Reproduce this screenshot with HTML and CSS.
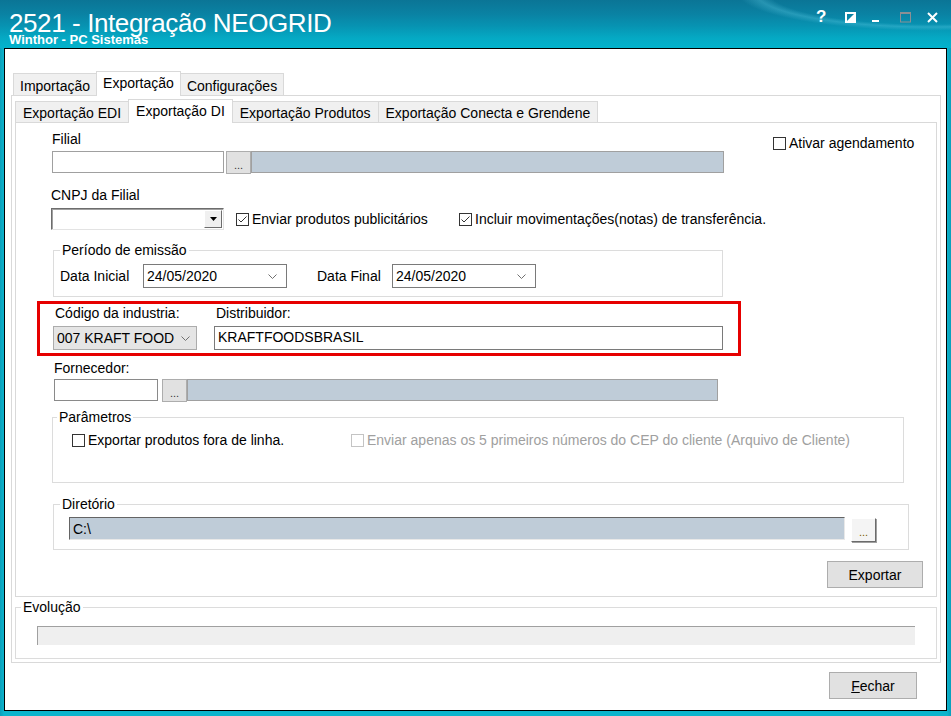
FILE: index.html
```html
<!DOCTYPE html>
<html lang="pt-BR">
<head>
    <meta charset="UTF-8">
    <meta name="viewport" content="width=device-width, initial-scale=1.0">
    <title>2521 - Integração NEOGRID</title>
    <link rel="stylesheet" href="styles.css">
</head>
<body>
<div class="window">
    <header class="titlebar">
        <div class="title">
            <div class="title-main">2521 - Integração NEOGRID</div>
            <div class="title-sub">Winthor - PC Sistemas</div>
        </div>
        <div class="caption-buttons">
            <span class="cap-help">?</span>
            <svg class="cap-icon cap-theme" width="11" height="11" viewBox="0 0 11 11">
                <rect x="1" y="1" width="9" height="9" fill="none" stroke="#fff" stroke-width="2"/>
                <polygon points="10,1 10,10 1,10" fill="#fff"/>
            </svg>
            <svg class="cap-icon cap-min" width="7" height="11" viewBox="0 0 7 11">
                <rect x="0" y="8" width="7" height="2" fill="#fff"/>
            </svg>
            <svg class="cap-icon cap-max" width="11" height="11" viewBox="0 0 11 11">
                <rect x="0.5" y="0.5" width="10" height="9.5" fill="none" stroke="#8a8f94"/>
                <rect x="0" y="0" width="11" height="2" fill="#8a8f94"/>
            </svg>
            <svg class="cap-icon cap-close" width="11" height="11" viewBox="0 0 11 11">
                <path d="M1 1 L10 10 M10 1 L1 10" stroke="#fff" stroke-width="2"/>
            </svg>
        </div>
    </header>

    <main class="client">
        <div class="tabs outer-tabs">
            <span class="tab">Importação</span>
            <span class="tab active">Exportação</span>
            <span class="tab">Configurações</span>
        </div>

        <section class="outer-panel">
            <div class="tabs inner-tabs">
                <span class="tab">Exportação EDI</span>
                <span class="tab active">Exportação DI</span>
                <span class="tab">Exportação Produtos</span>
                <span class="tab">Exportação Conecta e Grendene</span>
            </div>

            <div class="inner-panel">
                <div class="row-top">
                    <div class="filial">
                        <div class="label">Filial</div>
                        <div class="lookup">
                            <span class="field filial-code"></span>
                            <span class="btn-dots">...</span>
                            <span class="field readonly filial-name"></span>
                        </div>
                    </div>
                    <label class="check ativar"><span class="chk"></span>Ativar agendamento</label>
                </div>

                <div class="label cnpj-label">CNPJ da Filial</div>
                <div class="row-cnpj">
                    <span class="combo-classic">
                        <span class="drop">
                            <svg width="7" height="4" viewBox="0 0 7 4"><polygon points="0,0 7,0 3.5,4" fill="#000"/></svg>
                        </span>
                    </span>
                    <label class="check enviar">
                        <span class="chk"><svg width="11" height="11" viewBox="0 0 11 11"><path d="M1.5 5.5 L4 8 L9.5 2.5" fill="none" stroke="#333" stroke-width="1"/></svg></span>Enviar produtos publicitários
                    </label>
                    <label class="check">
                        <span class="chk"><svg width="11" height="11" viewBox="0 0 11 11"><path d="M1.5 5.5 L4 8 L9.5 2.5" fill="none" stroke="#333" stroke-width="1"/></svg></span>Incluir movimentações(notas) de transferência.
                    </label>
                </div>

                <fieldset class="group periodo">
                    <legend>Período de emissão</legend>
                    <div class="row-datas">
                        <span class="data-label">Data Inicial</span>
                        <span class="date">24/05/2020
                            <svg width="9" height="5" viewBox="0 0 9 5"><polyline points="0.5,0.5 4.5,4.5 8.5,0.5" fill="none" stroke="#707070"/></svg>
                        </span>
                        <span class="data-label final">Data Final</span>
                        <span class="date">24/05/2020
                            <svg width="9" height="5" viewBox="0 0 9 5"><polyline points="0.5,0.5 4.5,4.5 8.5,0.5" fill="none" stroke="#707070"/></svg>
                        </span>
                    </div>
                </fieldset>

                <div class="highlight">
                    <div class="col-industria">
                        <div class="label">Código da industria:</div>
                        <span class="combo">007 KRAFT FOOD
                            <svg width="9" height="5" viewBox="0 0 9 5"><polyline points="0.5,0.5 4.5,4.5 8.5,0.5" fill="none" stroke="#707070"/></svg>
                        </span>
                    </div>
                    <div class="col-distribuidor">
                        <div class="label">Distribuidor:</div>
                        <span class="field text distribuidor">KRAFTFOODSBRASIL</span>
                    </div>
                </div>

                <div class="label fornecedor-label">Fornecedor:</div>
                <div class="lookup fornecedor">
                    <span class="field fornecedor-code"></span>
                    <span class="btn-dots">...</span>
                    <span class="field readonly fornecedor-name"></span>
                </div>

                <fieldset class="group parametros">
                    <legend>Parâmetros</legend>
                    <div class="row-params">
                        <label class="check fora-linha"><span class="chk"></span>Exportar produtos fora de linha.</label>
                        <label class="check disabled"><span class="chk"></span>Enviar apenas os 5 primeiros números do CEP do cliente (Arquivo de Cliente)</label>
                    </div>
                </fieldset>

                <fieldset class="group diretorio">
                    <legend>Diretório</legend>
                    <div class="row-dir">
                        <span class="field path">C:\</span>
                        <span class="btn-dots raised">...</span>
                    </div>
                </fieldset>

                <div class="actions">
                    <button class="btn btn-exportar">Exportar</button>
                </div>
            </div>

            <fieldset class="group evolucao">
                <legend>Evolução</legend>
                <div class="progress"></div>
            </fieldset>
        </section>

        <div class="footer">
            <button class="btn btn-fechar"><u>F</u>echar</button>
        </div>
    </main>
</div>
</body>
</html>
```

FILE: styles.css
```css
* {
    box-sizing: border-box;
}

body {
    margin: 0;
    font-family: "Liberation Sans", Arial, sans-serif;
    font-size: 14px;
    line-height: 16px;
    color: #000;
    background-color: #07afc8;
    overflow: hidden;
}

.window {
    width: 951px;
    height: 716px;
    display: flex;
    flex-direction: column;
    background: linear-gradient(to right, #0a9fbb 0, #0cb4cc 4px, #0cb4cc 947px, #0a9fbb 951px);
}

/* title bar */

.titlebar {
    height: 48px;
    flex: none;
    display: flex;
    justify-content: space-between;
    padding: 0 13px 0 9px;
    background:
        radial-gradient(ellipse 230px 46px at 930px -8px, rgba(0, 0, 0, 0) 70%, rgba(90, 200, 225, 0.35) 76%, rgba(0, 0, 0, 0) 84%),
        linear-gradient(to bottom, #0b7596 0, #0a82a3 14px, #0793b2 26px, #05a9c4 38px, #03b3cc 48px);
    color: #fff;
}

.title-main {
    margin-top: 12px;
    font-size: 26px;
    line-height: 22px;
    letter-spacing: -0.4px;
}

.title-sub {
    font-size: 13px;
    line-height: 11px;
    font-weight: bold;
}

.caption-buttons {
    display: flex;
    align-items: flex-start;
    margin-top: 8px;
}

.cap-help {
    width: 10px;
    font-size: 17px;
    line-height: 17px;
    font-weight: bold;
}

.cap-icon {
    margin-top: 4px;
}

.cap-theme { margin-left: 19px; }
.cap-min { margin-left: 16px; }
.cap-max { margin-left: 21px; }
.cap-close { margin-left: 16px; }

/* client area */

.client {
    flex: 1;
    margin: 0 4px 5px 4px;
    background-color: #fff;
    border: 1px solid #000;
    padding: 22px 5px 0 6px;
    display: flex;
    flex-direction: column;
}

.tabs {
    display: flex;
    align-items: flex-end;
    flex: none;
}

.tab {
    border: 1px solid #d9d9d9;
    border-bottom: none;
    background-color: #f0f0f0;
    margin-right: -1px;
    white-space: nowrap;
}

.tab.active {
    background-color: #fff;
    position: relative;
    z-index: 1;
    margin-bottom: -1px;
}

.outer-tabs {
    height: 24px;
    padding-left: 2px;
}

.outer-tabs .tab {
    height: 22px;
    padding: 4px 6px 0 6px;
}

.outer-tabs .tab.active {
    height: 25px;
    padding-top: 3px;
}

.outer-panel {
    width: 930px;
    border: 1px solid #d9d9d9;
    padding: 3px 3px 3px 3px;
    display: flex;
    flex-direction: column;
}

.inner-tabs {
    height: 23px;
}

.inner-tabs .tab {
    height: 21px;
    padding: 3px 7px 0 7px;
}

.inner-tabs .tab.active {
    height: 24px;
    padding-top: 3px;
}

.inner-panel {
    border: 1px solid #d9d9d9;
    padding: 0 0 8px 36px;
}

/* shared controls */

.label {
    white-space: nowrap;
}

.field {
    display: block;
    height: 22px;
    border: 1px solid #a0a0a0;
    background-color: #fff;
}

.field.readonly {
    background-color: #bfccd8;
}

.field.text {
    padding: 2px 3px;
}

.lookup {
    display: flex;
    height: 22px;
}

.btn-dots {
    width: 25px;
    height: 23px;
    background-color: #e1e1e1;
    border: 1px solid #adadad;
    font-size: 11px;
    line-height: 11px;
    padding-top: 8px;
    text-align: center;
    color: #333;
}

.btn-dots.raised {
    background-color: #f4f4f4;
    border-color: #fff #6b6b6b #6b6b6b #fff;
    box-shadow: 1px 1px 0 #a0a0a0;
    color: #7a5a00;
}

.check {
    display: flex;
    align-items: center;
    gap: 3px;
    white-space: nowrap;
}

.chk {
    width: 13px;
    height: 13px;
    flex: none;
    border: 1px solid #333;
    background-color: #fff;
}

.chk svg {
    display: block;
}

.check.disabled {
    color: #a0a0a0;
}

.check.disabled .chk {
    border-color: #c4c4c4;
}

.group {
    margin: 0;
    min-width: 0;
    border: 1px solid #dcdcdc;
}

.group legend {
    padding: 0 2px;
    line-height: 16px;
}

.btn {
    font-family: inherit;
    font-size: 14px;
    color: #000;
    background-color: #e1e1e1;
    border: 1px solid #adadad;
    height: 27px;
    padding: 0;
}

/* filial */

.row-top {
    display: flex;
    align-items: flex-start;
    margin-top: 8px;
}

.filial .lookup {
    margin-top: 4px;
}

.filial-code {
    width: 172px;
}

.filial .btn-dots {
    margin-left: 2px;
}

.filial-name {
    width: 473px;
}

.ativar {
    margin-left: 49px;
    margin-top: 4px;
}

/* cnpj */

.cnpj-label {
    margin-top: 14px;
    margin-left: -1px;
}

.row-cnpj {
    display: flex;
    align-items: center;
    height: 22px;
    margin-top: 5px;
    margin-left: -1px;
}

.combo-classic {
    width: 173px;
    height: 22px;
    border: 1px solid;
    border-color: #6d6d6d #e3e3e3 #e3e3e3 #6d6d6d;
    box-shadow: inset 1px 1px 0 #a0a0a0;
    background-color: #fff;
    display: flex;
    justify-content: flex-end;
    padding: 1px;
}

.drop {
    width: 18px;
    height: 18px;
    background-color: #f0f0f0;
    border: 1px solid;
    border-color: #fff #6d6d6d #6d6d6d #fff;
    display: flex;
    align-items: center;
    justify-content: center;
}

.enviar {
    width: 223px;
    margin-left: 12px;
}

/* periodo */

.periodo {
    margin-top: 12px;
    margin-left: 1px;
    width: 670px;
    padding: 6px 8px 8px 6px;
}

.row-datas {
    display: flex;
    align-items: center;
    height: 24px;
}

.data-label {
    width: 83px;
}

.data-label.final {
    width: 75px;
    margin-left: 30px;
}

.date {
    width: 144px;
    height: 24px;
    border: 1px solid #7a7a7a;
    padding: 0 9px 0 3px;
    display: flex;
    align-items: center;
    justify-content: space-between;
}

/* industria / distribuidor */

.highlight {
    margin-top: 4px;
    margin-left: -15px;
    width: 704px;
    border: 3px solid #e60000;
    padding: 1px 0 3px 13px;
    display: flex;
    gap: 17px;
}

.highlight .label {
    margin-left: 2px;
}

.combo {
    margin-top: 5px;
    width: 144px;
    height: 24px;
    background-color: #e5e5e5;
    border: 1px solid #acacac;
    padding: 0 6px 0 3px;
    display: flex;
    align-items: center;
    justify-content: space-between;
}

.distribuidor {
    margin-top: 5px;
    width: 509px;
    height: 24px;
    border-color: #7a7a7a;
}

/* fornecedor */

.fornecedor-label {
    margin-top: 4px;
    margin-left: 2px;
}

.fornecedor {
    margin-top: 3px;
    margin-left: 2px;
}

.fornecedor-code {
    width: 104px;
    border-color: #8a8a8a;
}

.fornecedor .btn-dots {
    margin-left: 4px;
}

.fornecedor-name {
    width: 531px;
}

/* parametros */

.parametros {
    margin-top: 8px;
    width: 852px;
    padding: 7px 0 34px 4px;
}

.row-params {
    display: flex;
    align-items: center;
}

.fora-linha {
    width: 279px;
    margin-left: 15px;
}

/* diretorio */

.diretorio {
    margin-top: 13px;
    margin-left: 1px;
    width: 856px;
    padding: 5px 0 7px 6px;
}

.row-dir {
    display: flex;
    align-items: flex-start;
}

.path {
    margin-left: 9px;
    width: 776px;
    height: 23px;
    background-color: #bfccd8;
    border-color: #646464 #e8e8e8 #e8e8e8 #646464;
    padding: 3px 3px 1px 3px;
}

.row-dir .btn-dots {
    margin-left: 6px;
    margin-top: 1px;
    height: 24px;
}

.actions {
    display: flex;
    justify-content: flex-end;
    margin-top: 11px;
    margin-right: 13px;
}

.btn-exportar {
    width: 96px;
}

/* evolucao */

.evolucao {
    margin-top: 2px;
    width: 922px;
    padding: 11px 22px 13px 5px;
}

.progress {
    margin-left: 16px;
    width: 878px;
    height: 19px;
    background-color: #efefef;
    border-top: 1px solid #a0a0a0;
    border-left: 1px solid #a0a0a0;
}

.footer {
    display: flex;
    justify-content: flex-end;
    margin-top: 9px;
    margin-right: 24px;
}

.btn-fechar {
    width: 88px;
}
```
